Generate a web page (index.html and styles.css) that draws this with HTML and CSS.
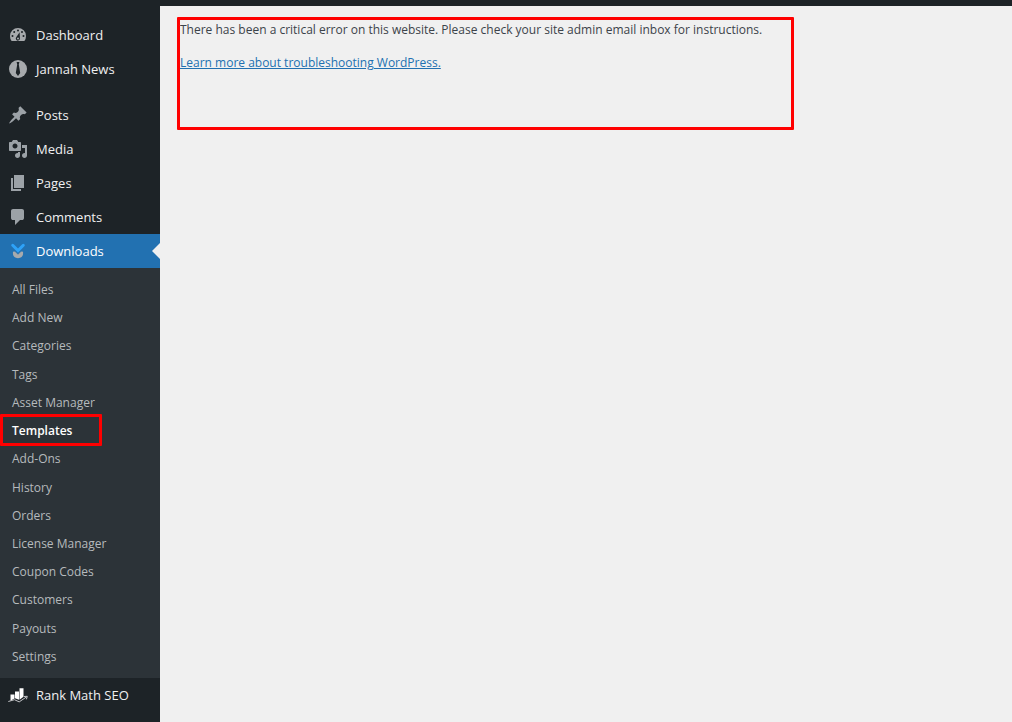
FILE: index.html
```html
<!DOCTYPE html>
<html lang="en">
<head>
<meta charset="utf-8">
<title>Templates ‹ Jannah News — WordPress</title>
<link rel="stylesheet" href="styles.css">
</head>
<body>
<div class="topbar"></div>
<div class="layout">
  <nav class="sidebar" aria-label="Main menu">
    <ul class="menu">
      <li><a class="item" href="#"><svg class="icon" viewBox="0 0 20 20"><path fill-rule="evenodd" d="M3.6 16A8 8 0 0 1 2 11a8 8 0 0 1 16 0 8 8 0 0 1-1.6 5zM9 5.500a1 1 0 1 0 2 0 1 1 0 1 0-2 0zM5.200 7a1 1 0 1 0 2 0 1 1 0 1 0-2 0zM13 7a1 1 0 1 0 2 0 1 1 0 1 0-2 0zM3.500 11a1 1 0 1 0 2 0 1 1 0 1 0-2 0zM14.500 11a1 1 0 1 0 2 0 1 1 0 1 0-2 0zM11.600 7.200l-3.200 4.800a2.100 2.100 0 1 0 3.500.8zM10 12.500a1 1 0 1 1 0 2 1 1 0 0 1 0-2z"/></svg>Dashboard</a></li>
      <li><a class="item" href="#"><svg class="icon" viewBox="0 0 20 20"><circle cx="10" cy="10" r="9"/><path class="cut" d="M8.600 3h2.800l-.6 2.600 1.400 8.400-2.200 3-2.200-3 1.400-8.400z"/></svg>Jannah News</a></li>
      <li class="separator" role="separator"></li>
      <li><a class="item" href="#"><svg class="icon icon-cool" viewBox="0 0 20 20"><path d="M10.440 3.020l1.820-1.820 6.360 6.350-1.830 1.820c-1.050-.68-2.480-.57-3.410.36l-.75.75c-.92.93-1.040 2.350-.35 3.410l-1.830 1.820-2.410-2.410-2.800 2.790c-.42.42-3.380 2.710-3.800 2.290s1.860-3.390 2.280-3.810l2.790-2.790L4.100 9.360l1.830-1.820c1.050.69 2.480.57 3.400-.36l.75-.75c.93-.92 1.050-2.350.36-3.410z"/></svg>Posts</a></li>
      <li><a class="item" href="#"><svg class="icon icon-cool" viewBox="0 0 20 20"><path d="M13 11V4c0-.55-.45-1-1-1h-1.670L9 1H5L3.670 3H2c-.55 0-1 .45-1 1v7c0 .55.45 1 1 1h10c.55 0 1-.45 1-1zM7 4.500c1.380 0 2.500 1.120 2.500 2.500S8.380 9.500 7 9.500 4.500 8.380 4.500 7 5.620 4.500 7 4.500zM14 6h5v10.500c0 1.380-1.120 2.500-2.500 2.500S14 17.880 14 16.500s1.120-2.500 2.500-2.500c.17 0 .34.02.5.05V9h-3V6zm-4 8.050V13h2v3.500c0 1.380-1.120 2.500-2.500 2.500S7 17.880 7 16.500 8.120 14 9.500 14c.17 0 .34.02.5.05z"/></svg>Media</a></li>
      <li><a class="item" href="#"><svg class="icon icon-cool" viewBox="0 0 20 20"><path d="M6 15V2h10v13H6zm-1 1h8v2H3V5h2v11z"/></svg>Pages</a></li>
      <li><a class="item" href="#"><svg class="icon icon-cool" viewBox="0 0 20 20"><path d="M5 2h9q.82 0 1.410.59T16 4v7q0 .82-.59 1.410T14 13h-2l-5 5v-5H5q-.82 0-1.410-.59T3 11V4q0-.82.59-1.410T5 2z"/></svg>Comments</a></li>
      <li>
        <a class="item item-current" href="#"><svg class="icon" viewBox="0 0 20 20"><path d="M5 10.800L7.300 10.300L10 12.800L12.700 10.300L15 10.800q.8 6.100-5 6.400-5.800-.3-5-6.400z"/><path class="bowl" d="M6 9.300l4 3.900 4-3.900"/><path class="chevron" d="M4.700 4.300L10 9.600l5.300-5.300"/></svg>Downloads</a>
        <ul class="submenu">
          <li><a class="subitem" href="#">All Files</a></li>
          <li><a class="subitem" href="#">Add New</a></li>
          <li><a class="subitem" href="#">Categories</a></li>
          <li><a class="subitem" href="#">Tags</a></li>
          <li><a class="subitem" href="#">Asset Manager</a></li>
          <li><a class="subitem subitem-current" href="#" aria-current="page">Templates</a></li>
          <li><a class="subitem" href="#">Add-Ons</a></li>
          <li><a class="subitem" href="#">History</a></li>
          <li><a class="subitem" href="#">Orders</a></li>
          <li><a class="subitem" href="#">License Manager</a></li>
          <li><a class="subitem" href="#">Coupon Codes</a></li>
          <li><a class="subitem" href="#">Customers</a></li>
          <li><a class="subitem" href="#">Payouts</a></li>
          <li><a class="subitem" href="#">Settings</a></li>
        </ul>
      </li>
      <li><a class="item" href="#"><svg class="icon icon-light" viewBox="0 0 20 20"><path d="M2.500 9.500h4v4l-4 2.200zM7 6.500h4v8.300l-4-1.500zM11.500 3.200h4v8.600l-4 3z"/><path class="trend" d="M.3 16.500l6.200-1.800 4.700 2.200 7.300-5M16 11.500l3.300-.2-.9 3"/></svg>Rank Math SEO</a></li>
    </ul>
  </nav>
  <main class="content">
    <section class="notice">
      <p>There has been a critical error on this website. Please check your site admin email inbox for instructions.</p>
      <p><a class="link" href="#">Learn more about troubleshooting WordPress.</a></p>
    </section>
  </main>
</div>
</body>
</html>
```
FILE: styles.css
```css
*,
*::after {
  box-sizing: border-box;
}

body {
  margin: 0;
  min-height: 100vh;
  display: flex;
  flex-direction: column;
  background: #f0f0f0;
  color: #3c434a;
  font-family: "Open Sans", "Noto Sans", sans-serif;
  font-size: 12px;
  line-height: 18px;
}

.topbar {
  height: 6px;
  background: #1d2327;
}

.layout {
  flex: 1;
  display: flex;
}

.sidebar {
  flex: none;
  width: 160px;
  padding-top: 12px;
  background: #1d2327;
}

.menu,
.submenu {
  margin: 0;
  padding: 0;
  list-style: none;
}

.item {
  position: relative;
  display: flex;
  align-items: center;
  gap: 8px;
  height: 34px;
  padding-left: 8px;
  color: #f0f0f1;
  font-size: 13px;
  text-decoration: none;
  white-space: nowrap;
}

.item-current {
  background: #2271b1;
  color: #fff;
}

.item-current::after {
  content: "";
  position: absolute;
  right: 0;
  top: 9px;
  border: 8px solid transparent;
  border-left-width: 0;
  border-right-color: #f0f0f0;
}

.separator {
  height: 12px;
}

.icon {
  flex: none;
  width: 20px;
  height: 20px;
  fill: #a7aaad;
}

.icon-cool {
  fill: #9ca2a7;
}

.icon-light {
  fill: #fff;
}

.cut {
  fill: #1d2327;
}

.chevron {
  fill: none;
  stroke: #2ea2f8;
  stroke-width: 3;
  stroke-linecap: round;
}

.bowl {
  fill: none;
  stroke: #2271b1;
  stroke-width: 1;
}

.trend {
  fill: none;
  stroke: #c3c4c7;
  stroke-width: 1;
}

.submenu {
  display: flex;
  flex-direction: column;
  justify-content: space-between;
  min-height: 410px;
  padding: 8px 0 7px;
  background: #2c3338;
}

.subitem {
  position: relative;
  display: block;
  padding: 5px 12px;
  color: #b6babd;
  text-decoration: none;
}

.subitem-current {
  color: #fff;
  font-weight: 600;
}

.subitem-current::after {
  content: "";
  position: absolute;
  top: -3px;
  bottom: -1px;
  left: 0;
  width: 102px;
  border: 3px solid #f00;
  border-radius: 1px;
}

.content {
  flex: 1;
  padding: 11px 17px;
}

.notice {
  max-width: 617px;
  min-height: 113px;
  padding-top: 1px;
  border: 3px solid #f00;
  border-radius: 1px;
}

.notice p {
  margin: 0 0 15px;
}

.link {
  color: #2271b1;
}
```
